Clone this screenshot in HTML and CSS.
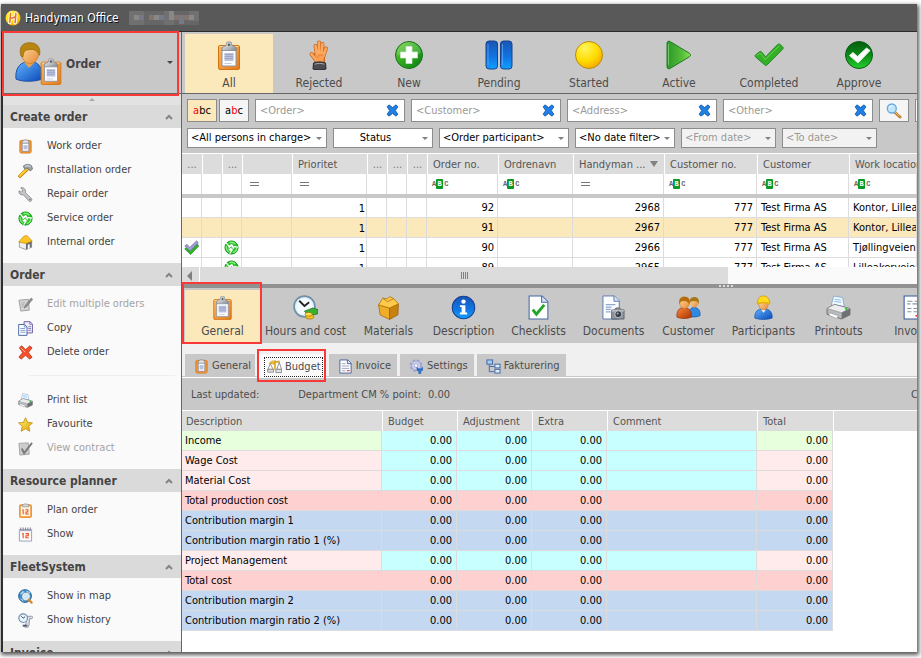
FILE: index.html
```html
<!DOCTYPE html>
<html lang="en">
<head>
<meta charset="utf-8">
<title>Handyman Office</title>
<link rel="stylesheet" href="styles.css">
</head>
<body>
<svg class="sprite" aria-hidden="true">
  <defs>
    <linearGradient id="g-orange" x1="0" y1="0" x2="1" y2="1"><stop offset="0" stop-color="#ffb955"/><stop offset="1" stop-color="#e47a1c"/></linearGradient>
    <linearGradient id="g-gold" x1="0" y1="0" x2="1" y2="1"><stop offset="0" stop-color="#fff266"/><stop offset="1" stop-color="#e0a010"/></linearGradient>
    <radialGradient id="g-sun" cx=".35" cy=".25" r=".8"><stop offset="0" stop-color="#fff45c"/><stop offset=".6" stop-color="#ffdc00"/><stop offset="1" stop-color="#f4a800"/></radialGradient>
    <linearGradient id="g-green" x1="0" y1="0" x2="1" y2="1"><stop offset="0" stop-color="#6fd03c"/><stop offset=".5" stop-color="#2ea81e"/><stop offset="1" stop-color="#0c7c14"/></linearGradient>
    <linearGradient id="g-play" x1="0" y1="0" x2="1" y2="0"><stop offset="0" stop-color="#2b962c"/><stop offset=".6" stop-color="#52bb38"/><stop offset="1" stop-color="#86e050"/></linearGradient>
    <linearGradient id="g-approve" x1="0" y1="0" x2="0" y2="1"><stop offset="0" stop-color="#055c10"/><stop offset=".5" stop-color="#0b8a18"/><stop offset="1" stop-color="#25d02e"/></linearGradient>
    <linearGradient id="g-blue" x1="0" y1="0" x2="0" y2="1"><stop offset="0" stop-color="#1a56b4"/><stop offset=".55" stop-color="#1173e0"/><stop offset="1" stop-color="#10a0ff"/></linearGradient>
    <linearGradient id="g-shirt" x1="0" y1="0" x2="1" y2="1"><stop offset="0" stop-color="#62b4ff"/><stop offset="1" stop-color="#0a48b8"/></linearGradient>
    <linearGradient id="g-red" x1="0" y1="0" x2="1" y2="1"><stop offset="0" stop-color="#f58a3c"/><stop offset="1" stop-color="#b03000"/></linearGradient>
    <linearGradient id="g-skin" x1="0" y1="0" x2="1" y2="1"><stop offset="0" stop-color="#ffdba0"/><stop offset="1" stop-color="#e88a38"/></linearGradient>
    <linearGradient id="g-steel" x1="0" y1="0" x2="1" y2="1"><stop offset="0" stop-color="#ffffff"/><stop offset="1" stop-color="#808890"/></linearGradient>
  </defs>

  <symbol id="i-logo" viewBox="0 0 16 16">
    <circle cx="8" cy="8" r="7.5" fill="url(#g-sun)"/>
    <path d="M5.6 3.2 4.7 12.6M11 3.2l-.9 9.6M5 8.8l5.6-2" stroke="#fff" stroke-width="3.2" stroke-linecap="round" fill="none"/>
    <path d="M5.6 3.4 4.8 12.4M10.9 3.4l-.8 9.2M5 8.8l5.6-2" stroke="#e8742c" stroke-width="1.6" stroke-linecap="round" fill="none"/>
  </symbol>

  <symbol id="i-clipboard" viewBox="0 0 24 30">
    <rect x="1.500" y="5.500" width="21" height="24" rx="1.500" fill="url(#g-orange)" stroke="#cf7414"/>
    <path d="M2.500 6.500h19" stroke="#ffd89a"/>
    <path d="M5 7.500h14v18.500H5z" fill="#fbfcff" stroke="#8d93a8"/>
    <path d="M7.500 13h9v8h-9z" fill="#b9c0dc"/>
    <path d="M7.500 14.500h9M7.500 16.500h9M7.500 18.500h9" stroke="#98a1c6" stroke-width=".8"/>
    <path d="M7.500 23.500h7" stroke="#c5cade"/>
    <path d="M5 10.500V7.500l4-2 1-3.500h4l1 3.500 4 2v3z" fill="url(#g-steel)" stroke="#85898f" stroke-width=".8"/>
    <circle cx="12" cy="4.800" r="1.300" fill="#5a5f66"/>
  </symbol>

  <symbol id="i-clipboard-small" viewBox="0 0 14 16">
    <rect x="1" y="1.500" width="12" height="13.500" rx="1.500" fill="#f59a3c" stroke="#d87c1c"/>
    <path d="M3.500 4h7v9h-7z" fill="#fff" stroke="#7c84a4" stroke-width=".8"/>
    <path d="M4.800 6.500h4.400v4.500H4.800z" fill="#b9c0dc"/>
    <path d="M3.500 4.500V2.500L5.500 1h3l2 1.500v2z" fill="#dfe2e6" stroke="#7c8086" stroke-width=".7"/>
  </symbol>

  <symbol id="i-user" viewBox="0 0 28 40">
    <path d="M1 37c-1-9 3-16 10-17h7c7 1 10 8 9 17-7 3-20 3-26 0z" fill="url(#g-shirt)" stroke="#1a4fa8"/>
    <path d="M9 20l5 6 6-6-2-3h-7z" fill="#e9a050"/>
    <ellipse cx="15" cy="12" rx="8.500" ry="9.500" fill="url(#g-skin)" stroke="#c07820" stroke-width=".7"/>
    <path d="M6 14C3 4 9 0 16 .8c7 .4 10 6 8.500 12.500C22 8 19 7 15 7.500 10 8 8.500 9 8 15z" fill="#b8860f" stroke="#8f6407" stroke-width=".7"/>
  </symbol>

  <symbol id="i-hand" viewBox="0 0 20 30">
    <path d="M2.500 14 7 20M6.500 6 8 15M10 2.500V14M13.500 4 12.500 14M17 8.500 14 17" stroke="#c9641c" stroke-width="4" stroke-linecap="round"/>
    <path d="M5.500 14h10l-.5 8.500H6.500z" fill="#fb9d52" stroke="#c9641c" stroke-width="1.600"/>
    <path d="M2.500 14 7 20M6.500 6 8 15M10 2.500V14M13.500 4 12.500 14M17 8.500 14 17" stroke="#fda95f" stroke-width="2.600" stroke-linecap="round"/>
    <path d="M6.500 14h8.500l-.8 8h-7z" fill="#fb9d52"/>
    <path d="M8 18c1-2.500 3-3.500 6-3" stroke="#d87a30" fill="none" stroke-width=".8"/>
    <path d="M4.500 23c4-1.500 8-1.500 12 0l.5 6c-4 1.200-9 1.200-13 0z" fill="#4c4c50" stroke="#28282a"/>
    <path d="M5.500 24.200c3-1 7-1 10 0" stroke="#a8a8ac" fill="none"/>
  </symbol>

  <symbol id="i-new" viewBox="0 0 30 30">
    <circle cx="15" cy="15" r="13.500" fill="url(#g-green)" stroke="#17731a"/>
    <path d="M3 15a12 12 0 0 1 24-2c-7 4-17 1-24 2z" fill="#fff" opacity=".18"/>
    <path d="M12 6.500h6V12h5.500v6H18v5.500h-6V18H6.500v-6H12z" fill="#fff" stroke="#d2e8d0" stroke-width=".7"/>
  </symbol>

  <symbol id="i-pause" viewBox="0 0 28 30">
    <rect x="1" y="1" width="11.500" height="28" rx="3" fill="url(#g-blue)" stroke="#17438f"/>
    <rect x="15.500" y="1" width="11.500" height="28" rx="3" fill="url(#g-blue)" stroke="#17438f"/>
    <path d="M3 4v21M17.500 4v21" stroke="#6fb6ff" opacity=".6"/>
  </symbol>

  <symbol id="i-started" viewBox="0 0 30 30">
    <circle cx="15" cy="15" r="13.500" fill="url(#g-sun)" stroke="#b88a10"/>
  </symbol>

  <symbol id="i-play" viewBox="0 0 28 30">
    <path d="M2 3.500C2 1 3.500.6 5.500 1.800L24 13c2 1.300 2 2.700 0 4L5.500 28.200C3.500 29.400 2 29 2 26.500z" fill="url(#g-play)" stroke="#1f7a22"/>
    <path d="M3.500 4v21" stroke="#8bdc7c" opacity=".7"/>
  </symbol>

  <symbol id="i-check" viewBox="0 0 32 30">
    <path d="M1.500 15 6 11.500c1-.6 1.600-.4 2.300.5l4 5L25 4c1-1 1.800-1 2.800-.2l2.700 2.500c1 1 .8 1.600 0 2.500L14 25.500c-1 1-2 .8-2.800-.2L1.600 17c-.6-.8-.6-1.300-.1-2z" fill="#34b026" stroke="#1e8420"/>
    <path d="M3 15.500 6.500 13l5.500 6.800L26.500 5.500" stroke="#8be070" fill="none" opacity=".7"/>
  </symbol>

  <symbol id="i-approve" viewBox="0 0 30 30">
    <circle cx="15" cy="15" r="13.500" fill="url(#g-approve)" stroke="#0a5c12"/>
    <path d="M5.500 15.500 9 12.500l4.500 4L22.500 8l3.500 2.500-12 12.500z" fill="#fff" stroke="#dceedd" stroke-linejoin="round"/>
  </symbol>

  <symbol id="i-clear" viewBox="0 0 12 12">
    <path d="M1 2.500 2.800.8 6 3.300 9.200.8 11 2.500 8.600 6 11 9.500l-1.800 1.700L6 8.700l-3.200 2.500L1 9.500 3.400 6z" fill="#1f7fe4" stroke="#1457ac" stroke-width=".8"/>
  </symbol>

  <symbol id="i-search" viewBox="0 0 16 16">
    <path d="m9 9.500 5 4.500" stroke="#c77f38" stroke-width="3" stroke-linecap="round"/>
    <path d="m9 9 4.500 4.200" stroke="#f0bb74" stroke-width="1"/>
    <circle cx="5.800" cy="5.500" r="4.500" fill="#bfe6fb" stroke="#6aa9dc" stroke-width="1.300"/>
    <path d="M3.500 5c.4-1.400 1.500-2 3-2" stroke="#fff" fill="none"/>
  </symbol>

  <symbol id="i-hammer" viewBox="0 0 16 16">
    <path d="M2 14 10 6.500" stroke="#b87808" stroke-width="3.600" stroke-linecap="round"/>
    <path d="M2 13.700 10 6.200" stroke="#ffcf2e" stroke-width="2.200" stroke-linecap="round"/>
    <path d="M5.500 3.500C8 1 12 .8 14.500 3l1 3.500-2.500 2-2-2.500-2-.5-1.500 1.500z" fill="#9aa0a6" stroke="#666b70" stroke-width=".8"/>
    <path d="M7.500 3.500c2-1 4.500-.6 6 .5" stroke="#e8eaec" fill="none"/>
  </symbol>

  <symbol id="i-wrench" viewBox="0 0 16 16">
    <path d="M1 4 1.200 6.500c1 2 3 2.200 4.500 1.800l6 6.700c1.800 1.300 4-.8 2.700-2.700L8 6.200C8.500 4 7.500 1.600 5 .6L3 .8l2 2.500L4.500 5 3 5.200z" fill="#c4c6c8" stroke="#7c7f83" stroke-width=".8"/>
    <circle cx="12.800" cy="13.300" r=".8" fill="#666"/>
  </symbol>

  <symbol id="i-recycle" viewBox="0 0 16 16">
    <circle cx="8" cy="8" r="7" fill="#2cc02c" stroke="#12941a"/>
    <circle cx="8" cy="8" r="5.600" fill="none" stroke="#86ec78" stroke-width="1.400" stroke-dasharray="7 4.700"/>
    <path d="M5 6.500 8.500 4l2.500 4-2.500 4L5 11z" fill="#fff"/>
    <path d="M2.500 3.200 5.500 7M15 7.500l-4.500-.5M6 14.500 8.500 11" stroke="#fff" stroke-width="1.300"/>
    <path d="M5.500 9.500 8 7l1 3" fill="none" stroke="#2cae30" stroke-width=".9"/>
  </symbol>

  <symbol id="i-house" viewBox="0 0 16 16">
    <path d="M1.500 7v6l7 2.500 6-2.500V6.500z" fill="#eceff2" stroke="#85888d" stroke-width=".8"/>
    <path d="M8.500 8v7.500l6-2.500V6.500z" fill="#6d7076"/>
    <path d="M.8 7.500 6 1.500l3.500-1 5.700 6L8.500 9z" fill="#ffc524" stroke="#c98a08" stroke-width=".8"/>
    <path d="M10.500 10.500l2-.6V14l-2 .8z" fill="#fff"/>
  </symbol>

  <symbol id="i-edit" viewBox="0 0 16 16">
    <path d="M1 3.500 11 2.500l1 11.500-9 1z" fill="#d6d6d6" stroke="#9c9c9c"/>
    <path d="M3.500 6.500l4-.5M3.500 8.500l3-.3M4 10.500l2-.2" stroke="#a8a8a8"/>
    <path d="m6.500 12 1-3L14 1l1.700 1.500-6.500 8z" fill="#8c8c8c" stroke="#6c6c6c" stroke-width=".5"/>
  </symbol>

  <symbol id="i-contract" viewBox="0 0 16 16">
    <path d="M1 2.500 11 2l1 12-10 1z" fill="#cdcdcd" stroke="#a4a4a4"/>
    <path d="m4 8 2.500 5L15 2" stroke="#7a7a7a" stroke-width="2" fill="none"/>
  </symbol>

  <symbol id="i-copy" viewBox="0 0 16 16">
    <path d="M6.500.7h6.300l2.600 2.500v9.500H6.500z" fill="#f0ecfa" stroke="#6c5ba8"/>
    <path d="M12.500 1v2.500h3M11 6h3M11 8h3M11 10h3" stroke="#8877bd" fill="none"/>
    <path d="M.7 3.700h6.200l2.700 2.600v9H.7z" fill="#fff" stroke="#42629f"/>
    <path d="M6.700 4v2.500h3M2.500 8h5M2.500 10h5.500M2.500 12h5.500" stroke="#7d9bd0" fill="none"/>
  </symbol>

  <symbol id="i-delete" viewBox="0 0 16 16">
    <path d="M1.500 3 4 .8 8 5l4.500-4L15 3l-4 5 4 5-2.500 2L8 11l-4.500 4L1 13l4-5z" fill="#f4512c" stroke="#b42408" stroke-width=".8"/>
    <path d="M3 3l4.500 4.500" stroke="#ffb49a"/>
  </symbol>

  <symbol id="i-printer" viewBox="0 0 24 24">
    <path d="M5 10 7.500 1 16 2.500 17.500 11z" fill="#f2f9ff" stroke="#7ea6cc" stroke-width=".8"/>
    <path d="M8.500 4l6 1M8 6l6.500 1.200" stroke="#8ec0ea"/>
    <path d="M1 13 8 9l15 4v6l-8 4L1 18.500z" fill="#b8bbbd" stroke="#5e6164" stroke-width=".8"/>
    <path d="M1 13 8 9l15 4-8 4z" fill="#eceded" stroke="#85888b" stroke-width=".6"/>
    <path d="M15 17v6l8-4v-6z" fill="#6e7174"/>
    <path d="M3 17l9 3-2 2.500-7-3z" fill="#fff" stroke="#888" stroke-width=".5"/>
    <circle cx="19.500" cy="13.300" r="1.300" fill="#35c435"/>
  </symbol>

  <symbol id="i-star" viewBox="0 0 16 16">
    <path d="m8 .8 2.200 4.900 5.200.6-3.900 3.600 1.100 5.300L8 12.500l-4.600 2.700 1.100-5.300L.6 6.300l5.200-.6z" fill="url(#g-gold)" stroke="#c08f10" stroke-width=".9" stroke-linejoin="round"/>
  </symbol>

  <symbol id="i-plan" viewBox="0 0 16 16">
    <rect x="2" y="2.200" width="12" height="12.800" rx="1.200" fill="#fdf3e4" stroke="#ee9530" stroke-width="1.800"/>
    <path d="M4.500 4V2L7 1h2l2.500 1v2z" fill="#d8dadd" stroke="#888" stroke-width=".7"/>
    <path d="M5.500 7v5M4.500 8l1-1M8 7.300h2.500v2.200H8.500v2.200H11.500" stroke="#e8541c" stroke-width="1.100" fill="none"/>
  </symbol>

  <symbol id="i-calendar" viewBox="0 0 16 16">
    <path d="M1.500 3h13v12h-13z" fill="#fbfbff" stroke="#9d9bb8"/>
    <path d="M1 2h14v2.500H1z" fill="#b4b2c4"/>
    <path d="M3 .5v3M5.500.5v3M8 .5v3M10.500.5v3M13 .5v3" stroke="#65637a" stroke-width=".8"/>
    <path d="M5.500 6.500V12M4.500 7.500l1-1M8 7h3v2.300H8.500v2.200H11.500" stroke="#e8541c" stroke-width="1.200" fill="none"/>
  </symbol>

  <symbol id="i-map" viewBox="0 0 16 16">
    <circle cx="7.500" cy="7.500" r="6.800" fill="#3c8fd0" stroke="#215e98"/>
    <path d="M2 5l3-3 2 1-2 3zM9 1.500l4 2-1 2-3-1zM2 10l3 1 1 3z" fill="#a8d4ec"/>
    <circle cx="8.500" cy="8" r="3.800" fill="#cfe8f8" stroke="#e8eef2" stroke-width="1.400"/>
    <circle cx="8.500" cy="8" r="4.500" fill="none" stroke="#4c6a88" stroke-width=".6"/>
    <path d="m11.500 11.500 3 3" stroke="#d88a28" stroke-width="2.400" stroke-linecap="round"/>
  </symbol>

  <symbol id="i-history" viewBox="0 0 16 16">
    <path d="M9 3.500h5.500c1.500 0 1.500 2.500 0 2.500H12.500l-1 8c-1 1.800-4 1.500-5 .5l2-3z" fill="#dfe1ea" stroke="#777b90" stroke-width=".8"/>
    <circle cx="5.500" cy="5.500" r="4.600" fill="#e6f4fc" stroke="#6d8fb0" stroke-width="1.200"/>
    <path d="M3.500 3.500l2 2 2-1.500" stroke="#345" fill="none"/>
    <path d="M5 13.500h5" stroke="#555a70" stroke-width="2"/>
  </symbol>

  <symbol id="i-done" viewBox="0 0 16 16">
    <path d="m.8 9.500 2.700-2 3 3L14 4l1.700 2.500L7 15.500z" fill="#2fb62a" stroke="#128018" stroke-width=".7"/>
    <path d="M.8 6.500 3.200 4.500 6 8l7.500-7.200L15.300 3 6.500 11.800z" fill="#a19ed2" stroke="#6e6ca4" stroke-width=".7"/>
  </symbol>

  <symbol id="i-clock" viewBox="0 0 24 24">
    <circle cx="11" cy="11" r="10" fill="#dff0fa" stroke="#7290a8" stroke-width="1.600"/>
    <circle cx="11" cy="11" r="7.800" fill="#f4fbff"/>
    <path d="M6 5.500 11 10.500 15.500 7" stroke="#222" stroke-width="1.800" fill="none"/>
    <path d="M11 15.500l8-3 5 1.500v4l-9 2z" fill="#38b030" stroke="#187018" stroke-width=".7"/>
    <ellipse cx="16" cy="21" rx="4" ry="2" fill="#f2c028" stroke="#a67c08" stroke-width=".8"/>
    <ellipse cx="15" cy="18.500" rx="3.500" ry="1.800" fill="#ffdf55" stroke="#a67c08" stroke-width=".8"/>
  </symbol>

  <symbol id="i-box" viewBox="0 0 24 24">
    <path d="M2.500 9.500 13 12.500V23.500L4 19z" fill="#f0ae28" stroke="#a86c08" stroke-width=".8"/>
    <path d="M13 12.500 21.500 8.500 21 19l-8 4.500z" fill="#c98210" stroke="#a06408" stroke-width=".8"/>
    <path d="M2.500 9.500 6.500 3l4.500.8L13 1.500l4 2 4.500 5-8.500 4z" fill="#ffc94e" stroke="#b07808" stroke-width=".8"/>
    <path d="M6.500 3 11 6.500l6-3" fill="none" stroke="#b07808" stroke-width=".8"/>
  </symbol>

  <symbol id="i-info" viewBox="0 0 24 24">
    <circle cx="12" cy="12" r="10.800" fill="url(#g-blue)" stroke="#123f8e"/>
    <circle cx="12" cy="6.300" r="2.100" fill="#fff"/>
    <path d="M8.500 9.800h5.300v7h1.700v1.800h-7v-1.800h1.700v-5.200H8.500z" fill="#fff"/>
  </symbol>

  <symbol id="i-checklist" viewBox="0 0 20 24">
    <path d="M1 1h12.500L19 6.500V23H1z" fill="#fbfdff" stroke="#4668a4"/>
    <path d="M13 1v6h6" fill="#d4e2f6" stroke="#4668a4"/>
    <path d="m4.500 14 3.500 4.500 7.500-9" stroke="#22a526" stroke-width="2.800" fill="none"/>
  </symbol>

  <symbol id="i-document" viewBox="0 0 24 26">
    <path d="M1 1h12l5 5v19H1z" fill="#fbfdff" stroke="#5c78ac"/>
    <path d="M12.500 1v5.500h5.500" fill="#d4e2f6" stroke="#5c78ac"/>
    <path d="M4 10h10M4 12.500h6M4 15h5M4 17.500h5" stroke="#8fa8d0" stroke-width="1.300"/>
    <path d="M10 15.500h3l1.500-2h4l1.500 2h3V25H10z" fill="#8e959c" stroke="#50565c" stroke-width=".8"/>
    <path d="M10 16.500h13" stroke="#dadde0"/>
    <circle cx="17" cy="20" r="3.600" fill="#383c44" stroke="#c4c8cc"/>
    <circle cx="16.300" cy="19.300" r="1.100" fill="#9aa8d8"/>
  </symbol>

  <symbol id="i-customers" viewBox="0 0 26 24">
    <path d="M13 21c0-6 2-9 6-9s6.500 3 6 8.500c-3 1.500-9 2-12 .5z" fill="#2f8ae4" stroke="#1a58a8" stroke-width=".8"/>
    <ellipse cx="19" cy="7" rx="4.300" ry="5" fill="url(#g-skin)"/>
    <path d="M14.500 8C13.500 3 16 1 19.500 1.200c4 .2 5 3.800 4 7.300-1-3-3-4-8.500-2.500z" fill="#a87818"/>
    <path d="M1 22c-.5-6.500 2-9.500 7-10 5.500 0 8.500 3.500 8 10-4 2-11 2-15 0z" fill="url(#g-red)" stroke="#9c3408" stroke-width=".8"/>
    <ellipse cx="8.800" cy="7" rx="5" ry="6" fill="url(#g-skin)" stroke="#c67a24" stroke-width=".6"/>
    <path d="M3.700 8.500C2.500 3 5 .6 9 .8c4.500 0 6.300 3.700 5 8-1.500-3-4-4.600-9-3z" fill="#b46c0c"/>
  </symbol>

  <symbol id="i-worker" viewBox="0 0 20 26">
    <path d="M1 24c-.5-6.500 3-9.500 9-10 6 .5 9.500 3.500 9 10-5 2-13 2-18 0z" fill="url(#g-shirt)" stroke="#1a58b0" stroke-width=".8"/>
    <path d="M7.500 15l2.500 3.500 2.500-3.500z" fill="#fff"/>
    <ellipse cx="10" cy="10" rx="4.800" ry="5.500" fill="url(#g-skin)" stroke="#c67a24" stroke-width=".6"/>
    <path d="M3.500 9C4 3 6.500 1 10 1s6 2 6.500 8c-4-1.500-9-1.500-13 0z" fill="#ffda1e" stroke="#c89808" stroke-width=".8"/>
    <path d="M3 9.500c4-2 10-2 14 0" stroke="#e8b410" stroke-width="1.600" fill="none"/>
  </symbol>

  <symbol id="i-invoice" viewBox="0 0 20 24">
    <path d="M1 1h18v22H1z" fill="#fcfdff" stroke="#38589c"/>
    <path d="M4 6h5M11 6h5M4 8.500h3M9 8.500h6M4 13h4M10 13h6M4 16h4M10 16h5" stroke="#8c94a4"/>
    <path d="M12 20h4" stroke="#e02020" stroke-width="1.500"/>
  </symbol>

  <symbol id="i-scales" viewBox="0 0 16 16">
    <path d="M8.500 1.500v10M2.500 4.500 13.500 2.500" stroke="#d9a41c" stroke-width="1.700"/>
    <path d="M3.500 5 1 11h5.500zM13 3.500 10.500 11H15.500z" fill="#fff" stroke="#747474" stroke-width=".8"/>
    <path d="M.5 11h6.500v3H.8zM9.500 11h6l.3 3.500H9.500z" fill="#dfe1e4" stroke="#777" stroke-width=".8"/>
    <path d="M3.500 4.500C4 2 6.500 1.500 8.500 2.500l-1 3z" fill="#f6c838" stroke="#b98a10" stroke-width=".6"/>
  </symbol>

  <symbol id="i-page" viewBox="0 0 14 16">
    <path d="M1 1h8.500L13 4.500V15H1z" fill="#fff" stroke="#4a62a0"/>
    <path d="M9 1v4h4" fill="#dbe4f6" stroke="#4a62a0"/>
    <path d="M3 5h4M3 7.500h8M3 10h8M3 12.500h4" stroke="#9aa4b8"/>
    <path d="M8.500 12.500h3" stroke="#e02020"/>
  </symbol>

  <symbol id="i-gear" viewBox="0 0 16 16">
    <circle cx="7.500" cy="7" r="5.800" fill="none" stroke="#9da2d0" stroke-width="2" stroke-dasharray="2.600 2"/>
    <circle cx="7.500" cy="7" r="4.800" fill="#d0d4f0" stroke="#9a9fd0"/>
    <circle cx="7.500" cy="7" r="2" fill="#fff" stroke="#8a8fc4" stroke-width=".8"/>
    <path d="M8.500 9v3l2 1v2.500h2V13l2-1V9l-1.500 1.500h-3z" fill="#2c7ae0" stroke="#1450a4" stroke-width=".6"/>
  </symbol>

  <symbol id="i-tree" viewBox="0 0 16 16">
    <path d="M3.500 6v7.500H9M3.500 8H9" stroke="#4468a0" fill="none"/>
    <rect x="1" y="1" width="6" height="4.500" fill="#a8cdf4" stroke="#3a62a4"/>
    <rect x="9.500" y="5.500" width="5.500" height="4" fill="#e0ecfa" stroke="#3a62a4"/>
    <rect x="9.500" y="11" width="5.500" height="4" fill="#e0ecfa" stroke="#3a62a4"/>
  </symbol>

  <symbol id="i-chevron" viewBox="0 0 8 6">
    <path d="m1 5 3-3 3 3" stroke="#848484" stroke-width="2" fill="none"/>
  </symbol>

  <symbol id="i-equals" viewBox="0 0 9 4">
    <path d="M0 .5h9M0 3.500h9" stroke="#777"/>
  </symbol>
</svg>

<div class="window">
  <header class="titlebar">
    <svg class="logo"><use href="#i-logo"/></svg>
    <h1>Handyman Office</h1>
    <svg class="redacted" viewBox="0 0 70 14" aria-hidden="true">
      <path d="M0 0h70v14H0z" fill="#666"/>
      <path d="M0 0h15v14H0zM35 0h10v14H35zM60 0h10v10H60z" fill="#707070"/>
      <path d="M5 4h5v5H5zM25 4h5v5h-5zM40 0h5v9h-5zM60 4h5v5h-5z" fill="#888"/>
      <path d="M10 4h5v5h-5zM30 4h5v5h-5zM50 4h5v9h-5z" fill="#767a88"/>
      <path d="M20 4h5v5h-5zM45 4h5v5h-5zM55 4h5v5h-5z" fill="#84746e"/>
    </svg>
  </header>

  <div class="body">
    <aside class="sidebar">
      <button class="module marked" type="button">
        <span class="module-icon">
          <svg class="user"><use href="#i-user"/></svg>
          <svg class="board"><use href="#i-clipboard"/></svg>
        </span>
        <span class="module-name">Order</span>
        <span class="caret dark"></span>
      </button>
      <div class="scroll-up"><span></span></div>

      <section>
        <h2>Create order <svg><use href="#i-chevron"/></svg></h2>
        <ul>
          <li><a href="#"><svg><use href="#i-clipboard-small"/></svg>Work order</a></li>
          <li><a href="#"><svg><use href="#i-hammer"/></svg>Installation order</a></li>
          <li><a href="#"><svg><use href="#i-wrench"/></svg>Repair order</a></li>
          <li><a href="#"><svg><use href="#i-recycle"/></svg>Service order</a></li>
          <li><a href="#"><svg><use href="#i-house"/></svg>Internal order</a></li>
        </ul>
      </section>
      <section>
        <h2>Order <svg><use href="#i-chevron"/></svg></h2>
        <ul>
          <li><a href="#" class="off"><svg><use href="#i-edit"/></svg>Edit multiple orders</a></li>
          <li><a href="#"><svg><use href="#i-copy"/></svg>Copy</a></li>
          <li><a href="#"><svg><use href="#i-delete"/></svg>Delete order</a></li>
          <li class="divider"></li>
          <li><a href="#"><svg><use href="#i-printer"/></svg>Print list</a></li>
          <li><a href="#"><svg><use href="#i-star"/></svg>Favourite</a></li>
          <li><a href="#" class="off"><svg><use href="#i-contract"/></svg>View contract</a></li>
        </ul>
      </section>
      <section>
        <h2>Resource planner <svg><use href="#i-chevron"/></svg></h2>
        <ul>
          <li><a href="#"><svg><use href="#i-plan"/></svg>Plan order</a></li>
          <li><a href="#"><svg><use href="#i-calendar"/></svg>Show</a></li>
        </ul>
      </section>
      <section>
        <h2>FleetSystem <svg><use href="#i-chevron"/></svg></h2>
        <ul>
          <li><a href="#"><svg><use href="#i-map"/></svg>Show in map</a></li>
          <li><a href="#"><svg><use href="#i-history"/></svg>Show history</a></li>
        </ul>
      </section>
      <section>
        <h2>Invoice <svg><use href="#i-chevron"/></svg></h2>
      </section>
    </aside>

    <main>
      <nav class="states">
        <button type="button" class="active"><svg><use href="#i-clipboard"/></svg>All</button>
        <button type="button"><svg><use href="#i-hand"/></svg>Rejected</button>
        <button type="button"><svg><use href="#i-new"/></svg>New</button>
        <button type="button"><svg><use href="#i-pause"/></svg>Pending</button>
        <button type="button"><svg><use href="#i-started"/></svg>Started</button>
        <button type="button"><svg><use href="#i-play"/></svg>Active</button>
        <button type="button"><svg><use href="#i-check"/></svg>Completed</button>
        <button type="button"><svg><use href="#i-approve"/></svg>Approve</button>
      </nav>

      <form class="filters">
        <div class="filter-row">
          <div class="match">
            <button type="button" class="on"><span><i>a</i>bc</span></button>
            <button type="button"><span>a<i>b</i>c</span></button>
          </div>
          <div class="field"><input type="text" placeholder="&lt;Order&gt;" aria-label="Order"><button type="button" aria-label="Clear order"><svg><use href="#i-clear"/></svg></button></div>
          <div class="field"><input type="text" placeholder="&lt;Customer&gt;" aria-label="Customer"><button type="button" aria-label="Clear customer"><svg><use href="#i-clear"/></svg></button></div>
          <div class="field"><input type="text" placeholder="&lt;Address&gt;" aria-label="Address"><button type="button" aria-label="Clear address"><svg><use href="#i-clear"/></svg></button></div>
          <div class="field"><input type="text" placeholder="&lt;Other&gt;" aria-label="Other"><button type="button" aria-label="Clear other"><svg><use href="#i-clear"/></svg></button></div>
          <button type="button" class="tool" aria-label="Search"><svg><use href="#i-search"/></svg></button>
          <button type="button" class="tool" aria-label="More"></button>
        </div>
        <div class="filter-row">
          <div class="select w140"><select aria-label="Persons in charge"><option>&lt;All persons in charge&gt;</option></select></div>
          <div class="select w100 centered"><select aria-label="Status"><option>Status</option></select></div>
          <div class="select w130"><select aria-label="Order participant"><option>&lt;Order participant&gt;</option></select></div>
          <div class="select w100"><select aria-label="Date filter"><option>&lt;No date filter&gt;</option></select></div>
          <div class="select w95"><select aria-label="From date" disabled><option>&lt;From date&gt;</option></select></div>
          <div class="select w95"><select aria-label="To date" disabled><option>&lt;To date&gt;</option></select></div>
        </div>
      </form>

      <div class="orders">
        <table>
          <colgroup><col class="c20"><col class="c20"><col class="c20"><col class="c50"><col class="c75"><col class="c20"><col class="c20"><col class="c20"><col class="c71"><col class="c75"><col class="c91"><col class="c93"><col class="c92"><col class="rest"></colgroup>
          <thead>
            <tr><th class="dots">...</th><th></th><th class="dots">...</th><th></th><th>Prioritet</th><th class="dots">...</th><th class="dots">...</th><th class="dots">...</th><th>Order no.</th><th>Ordrenavn</th><th class="sorted">Handyman ...</th><th>Customer no.</th><th>Customer</th><th>Work location</th></tr>
            <tr class="search"><td></td><td></td><td></td><td><svg class="eq"><use href="#i-equals"/></svg></td><td><svg class="eq"><use href="#i-equals"/></svg></td><td></td><td></td><td></td><td><span class="abc">A<b>B</b>C</span></td><td><span class="abc">A<b>B</b>C</span></td><td><svg class="eq"><use href="#i-equals"/></svg></td><td><span class="abc">A<b>B</b>C</span></td><td><span class="abc">A<b>B</b>C</span></td><td><span class="abc">A<b>B</b>C</span></td></tr>
            <tr class="band"><td colspan="14"></td></tr>
          </thead>
          <tbody>
            <tr><td></td><td></td><td></td><td></td><td class="prio">1</td><td></td><td></td><td></td><td class="num">92</td><td></td><td class="num">2968</td><td class="num">777</td><td>Test Firma AS</td><td>Kontor, Lilleakerveien 2</td></tr>
            <tr class="picked"><td></td><td></td><td></td><td></td><td class="prio">1</td><td></td><td></td><td></td><td class="num">91</td><td></td><td class="num">2967</td><td class="num">777</td><td>Test Firma AS</td><td>Kontor, Lilleakerveien 2</td></tr>
            <tr><td class="pic"><svg><use href="#i-done"/></svg></td><td></td><td class="pic"><svg><use href="#i-recycle"/></svg></td><td></td><td class="prio">1</td><td></td><td></td><td></td><td class="num">90</td><td></td><td class="num">2966</td><td class="num">777</td><td>Test Firma AS</td><td>Tjøllingveien 6</td></tr>
            <tr><td></td><td></td><td class="pic"><svg><use href="#i-recycle"/></svg></td><td></td><td class="prio">1</td><td></td><td></td><td></td><td class="num">89</td><td></td><td class="num">2965</td><td class="num">777</td><td>Test Firma AS</td><td>Lilleakerveien 2</td></tr>
          </tbody>
        </table>
      </div>
      <div class="hscroll"><span class="left"></span><span class="thumb"><i></i><i></i><i></i><i></i></span></div>
      <div class="splitter"><i></i><i></i><i></i><i></i></div>

      <nav class="details">
        <button type="button" class="active marked"><svg><use href="#i-clipboard"/></svg>General</button>
        <button type="button" class="wide"><svg><use href="#i-clock"/></svg>Hours and cost</button>
        <button type="button"><svg><use href="#i-box"/></svg>Materials</button>
        <button type="button"><svg><use href="#i-info"/></svg>Description</button>
        <button type="button"><svg><use href="#i-checklist"/></svg>Checklists</button>
        <button type="button"><svg><use href="#i-document"/></svg>Documents</button>
        <button type="button"><svg><use href="#i-customers"/></svg>Customer</button>
        <button type="button"><svg><use href="#i-worker"/></svg>Participants</button>
        <button type="button"><svg><use href="#i-printer"/></svg>Printouts</button>
        <button type="button"><svg><use href="#i-invoice"/></svg>Invoice</button>
      </nav>

      <div class="tabs">
        <button type="button"><span><svg><use href="#i-clipboard-small"/></svg>General</span></button>
        <button type="button" class="current marked"><span><svg><use href="#i-scales"/></svg>Budget</span></button>
        <button type="button"><span><svg><use href="#i-page"/></svg>Invoice</span></button>
        <button type="button"><span><svg><use href="#i-gear"/></svg>Settings</span></button>
        <button type="button"><span><svg><use href="#i-tree"/></svg>Fakturering</span></button>
      </div>

      <div class="info">
        <span>Last updated:</span>
        <span class="point">Department CM % point:</span>
        <span>0.00</span>
        <span class="edge">CM</span>
      </div>

      <div class="budget">
        <table>
          <colgroup><col class="c200"><col class="c75"><col class="c75"><col class="c75"><col class="c150"><col class="c76"><col class="rest"></colgroup>
          <thead><tr><th>Description</th><th>Budget</th><th>Adjustment</th><th>Extra</th><th>Comment</th><th>Total</th><th></th></tr></thead>
          <tbody>
            <tr class="income"><td>Income</td><td>0.00</td><td>0.00</td><td>0.00</td><td></td><td>0.00</td></tr>
            <tr class="cost"><td>Wage Cost</td><td>0.00</td><td>0.00</td><td>0.00</td><td></td><td>0.00</td></tr>
            <tr class="cost"><td>Material Cost</td><td>0.00</td><td>0.00</td><td>0.00</td><td></td><td>0.00</td></tr>
            <tr class="total"><td>Total production cost</td><td>0.00</td><td>0.00</td><td>0.00</td><td></td><td>0.00</td></tr>
            <tr class="margin"><td>Contribution margin 1</td><td>0.00</td><td>0.00</td><td>0.00</td><td></td><td>0.00</td></tr>
            <tr class="margin"><td>Contribution margin ratio 1 (%)</td><td>0.00</td><td>0.00</td><td>0.00</td><td></td><td>0.00</td></tr>
            <tr class="cost"><td>Project Management</td><td>0.00</td><td>0.00</td><td>0.00</td><td></td><td>0.00</td></tr>
            <tr class="total"><td>Total cost</td><td>0.00</td><td>0.00</td><td>0.00</td><td></td><td>0.00</td></tr>
            <tr class="margin"><td>Contribution margin 2</td><td>0.00</td><td>0.00</td><td>0.00</td><td></td><td>0.00</td></tr>
            <tr class="margin"><td>Contribution margin ratio 2 (%)</td><td>0.00</td><td>0.00</td><td>0.00</td><td></td><td>0.00</td></tr>
          </tbody>
        </table>
      </div>
    </main>
  </div>
</div>
</body>
</html>
```
FILE: styles.css
```css
* { box-sizing: border-box; }

body {
  margin: 0;
  height: 100vh;
  padding: 4px 4px 6px 1px;
  overflow: hidden;
  background: #fff;
  color: #000;
  font: 11px/14px "DejaVu Sans Condensed", "DejaVu Sans", sans-serif;
}

button, input, select { font: inherit; color: inherit; margin: 0; padding: 0; border-radius: 0; }
button { border: 0; background: none; }
ul { list-style: none; margin: 0; padding: 0; }
a { color: inherit; text-decoration: none; }
svg { display: block; flex: none; }
table { border-collapse: separate; border-spacing: 0; table-layout: fixed; width: 100%; }
th { font-weight: normal; text-align: left; }
.sprite { position: absolute; width: 0; height: 0; }

.window {
  height: 100%;
  display: flex;
  flex-direction: column;
  background: #c8c8c8;
  box-shadow: 1px 2px 4px 1px rgba(0, 0, 0, .65);
}

.titlebar {
  flex: none;
  height: 28px;
  display: flex;
  align-items: center;
  gap: 4px;
  padding-left: 4px;
  background: #595959;
  border-bottom: 1px solid #2c2c2c;
}
.titlebar h1 { margin: 0 6px 0 0; font-size: 12px; line-height: 16px; font-weight: normal; color: #fff; text-shadow: 1px 1px 0 #111; }
.logo { width: 16px; height: 16px; }
.redacted { width: 70px; height: 14px; }

.body { flex: 1; min-height: 0; display: flex; border-left: 2px solid #2c3035; }

/* Red frame that calls attention to a control */
.marked { position: relative; }
.marked::after { content: ""; position: absolute; inset: -1px 2px -3px -1px; border: 2px solid #f93838; z-index: 2; pointer-events: none; }

/* Sidebar */
.sidebar { width: 179px; flex: none; display: flex; flex-direction: column; background: #fafafa; border-right: 1px solid #666; color: #444; clip-path: inset(-2px -2px 0 -2px); }
.module { flex: none; height: 62px; display: flex; align-items: center; padding: 0 8px 0 12px; background: #c8c8c8; border-bottom: 1px solid #666; text-align: left; }
.module-icon { display: flex; width: 46px; }
.user { width: 28px; height: 40px; margin-top: -2px; }
.board { width: 24px; height: 28px; align-self: flex-end; margin: 0 0 -3px -4px; }
.module-name { flex: 1; margin-left: 5px; padding-top: 2px; font-weight: bold; font-size: 12px; }
.caret { border: 3px solid transparent; border-top-color: #808080; border-bottom: 0; }
.caret.dark { border-top-color: #444; }
.scroll-up { flex: none; height: 11px; background: #e2e2e2; display: flex; justify-content: center; align-items: center; }
.scroll-up span { border: 3px solid transparent; border-bottom-color: #aaa; border-top: 0; }
.sidebar section { flex: none; }
.sidebar h2 { margin: 0; height: 23px; padding: 0 8px 0 7px; display: flex; align-items: center; justify-content: space-between; background: #dadada; font-size: 12px; line-height: 16px; }
.sidebar h2 svg { width: 8px; height: 6px; }
.sidebar ul { padding: 5px 0 10px; }
.sidebar li { height: 24px; }
.sidebar a { height: 24px; display: flex; align-items: center; gap: 14px; padding: 2px 0 0 15px; }
.sidebar a svg { width: 15px; height: 15px; }
.sidebar .off { color: #a4a4a4; }
.sidebar .divider::before { content: ""; display: block; margin: 0 6px 0 26px; padding-top: 12px; border-bottom: 1px solid #eee; }

/* Main column */
main { flex: 1; min-width: 0; display: flex; flex-direction: column; overflow: hidden; background: #fff; }

.states, .details { flex: none; display: flex; background: #c8c8c8; color: #4c4c4c; font-size: 12px; }
.states { height: 62px; padding: 2px 0 0 2px; border-bottom: 1px solid #666; overflow: hidden; }
.states button, .details button { flex: none; display: flex; flex-direction: column; align-items: center; line-height: 16px; white-space: nowrap; }
.states button { width: 88px; margin: 0 2px 0 0; padding-top: 6px; gap: 5px; }
.states button:first-child { margin-left: 1px; }
.states svg { width: 30px; height: 30px; }
.states .active, .details .active { background: #fbe8bb; }

.filters { flex: none; margin: 0; padding: 5px 0 5px 5px; display: flex; flex-direction: column; gap: 6px; background: #c8c8c8; }
.filter-row { display: flex; gap: 6px; }
.filter-row > * { flex: none; }
.match { display: flex; gap: 2px; }
.match button, .tool { width: 30px; height: 23px; background: #f5f5f5; border: 1px solid #8c8c8c; }
.match button { padding-top: 1px; }
.match .on { background: #fbe8bb; }
.match i { color: #f00; font-style: normal; }
.tool { display: flex; align-items: center; justify-content: center; }
.tool svg { width: 16px; height: 16px; }
.field { width: 150px; height: 23px; display: flex; align-items: center; background: #fff; border: 1px solid #8c8c8c; padding: 0 5px 0 4px; }
.field input { flex: 1; min-width: 0; border: 0; outline: 0; background: none; padding-top: 1px; }
.field input::placeholder { color: #999; opacity: 1; }
.field svg { width: 13px; height: 13px; }
.select { position: relative; height: 20px; }
.select select { width: 100%; height: 100%; appearance: none; background: #fff; border: 1px solid #8c8c8c; padding: 0 10px 0 3px; opacity: 1; }
.select select:disabled { background: #f2f2f2; color: #999; }
.select::after { content: ""; position: absolute; right: 5px; top: 9px; border: 3px solid transparent; border-top-color: #808080; border-bottom: 0; }
.select.centered select { text-align-last: center; padding-right: 18px; }
.w140 { width: 140px; }
.w130 { width: 130px; }
.w100 { width: 100px; }
.w95 { width: 95px; }

/* Order grid */
.c20 { width: 20px; }
.c50 { width: 50px; }
.c71 { width: 71px; }
.c75 { width: 75px; }
.c76 { width: 76px; }
.c91 { width: 91px; }
.c92 { width: 92px; }
.c93 { width: 93px; }
.c150 { width: 150px; }
.c200 { width: 200px; }
.rest { width: auto; }

.orders { flex: none; height: 114px; overflow: hidden; border-top: 1px solid #fff; }
th { height: 20px; padding: 2px 0 0 5px; background: #dcdcdc; color: #555; border-left: 1px solid #fff; white-space: nowrap; overflow: hidden; }
th:first-child { border-left: 0; padding-left: 4px; }
.orders td { height: 20px; padding: 0 3px 0 4px; border-right: 1px solid #dcdcdc; border-bottom: 1px solid #dcdcdc; white-space: nowrap; overflow: hidden; }
.orders th.dots { padding: 2px 0 0; text-align: center; color: #777; }
.orders .sorted { position: relative; }
.sorted::after { content: ""; position: absolute; right: 6px; top: 7px; border: 4px solid transparent; border-top: 6px solid #808080; border-bottom: 0; }
.orders .search td { border-bottom: 0; padding-left: 5px; }
.orders .band td { height: 4px; padding: 0; background: #c8c8c8; border: 0; }
.orders .picked td { background: #fbe8bb; }
.orders .num { text-align: right; }
.orders .prio { text-align: right; padding: 2px 1px 0 0; }
.orders .pic { padding: 0 2px; }
.pic svg { width: 15px; height: 15px; }
.eq { width: 9px; height: 4px; margin-left: 3px; }
.abc { display: flex; align-items: center; font: bold 7px/10px "Liberation Mono", monospace; color: #666; }
.abc b { width: 7px; margin: 0 1px 0 0; text-align: center; color: #fff; background: #0a9a24; border-radius: 1px; }

.hscroll { flex: none; height: 17px; display: flex; background: #fafafa; }
.hscroll .left { width: 18px; background: #dcdcdc; border-right: 1px solid #fff; display: flex; align-items: center; padding-left: 5px; }
.hscroll .left::before { content: ""; border: 5px solid transparent; border-right-color: #808080; border-left: 0; }
.thumb { width: 528px; margin-right: auto; background: #dcdcdc; display: flex; gap: 1px; justify-content: center; align-items: center; }
.thumb i { width: 1px; height: 7px; background: #808080; }
.splitter { flex: none; height: 4px; background: #919191; display: flex; gap: 2px; justify-content: center; align-items: center; padding-left: 352px; }
.splitter i { width: 2px; height: 2px; background: #ddd; }

/* Detail pane */
.details { height: 55px; padding: 2px 0 1px 3px; }
.details button { width: 75px; padding-top: 5px; gap: 3px; }
.details .wide { width: 91px; }
.details svg { width: 25px; height: 25px; }
.details .marked::after { inset: -8px -2px -2px -3px; }

.tabs { flex: none; height: 34px; padding: 11px 0 0 3px; display: flex; gap: 3px; background: #f0f0f0; border-bottom: 1px solid #c8c8c8; color: #4c4c4c; }
.tabs button { height: 22px; padding: 2px 6px 0 9px; background: #c8c8c8; }
.tabs button:first-child { padding-right: 4px; }
.tabs span { display: flex; align-items: center; gap: 3px; height: 18px; }
.tabs svg { width: 15px; height: 15px; }
.tabs .current { height: 23px; background: #fafafa; padding: 2px 4px 0 8px; margin-left: -1px; }
.current span { outline: 1px dotted #222; padding: 0 1px 0 2px; }
.tabs .marked::after { inset: -5px 0 -5px 0; }

.info { flex: none; height: 33px; padding: 2px 0 0 9px; display: flex; align-items: center; background: #c8c8c8; border-top: 1px solid #fff; color: #4c4c4c; overflow: hidden; }
.info .point { margin: 0 7px 0 39px; }
.info .edge { margin-left: auto; width: 6px; overflow: hidden; }

.budget { flex: 1; min-height: 0; overflow: hidden; border-top: 1px solid #fff; }
.budget td { height: 20px; padding: 0 4px 0 3px; text-align: right; border-right: 1px solid #dcdcdc; border-bottom: 1px solid #dcdcdc; white-space: nowrap; }
.budget td:first-child { text-align: left; }
.budget .income td { background: #e8ffde; }
.budget .cost td { background: #ffebeb; }
.budget .income td:nth-child(n+2):nth-child(-n+5),
.budget .cost td:nth-child(n+2):nth-child(-n+5) { background: #c8ffff; }
.budget .total td { background: #ffd0d0; }
.budget .margin td { background: #c4d8f2; }
```
